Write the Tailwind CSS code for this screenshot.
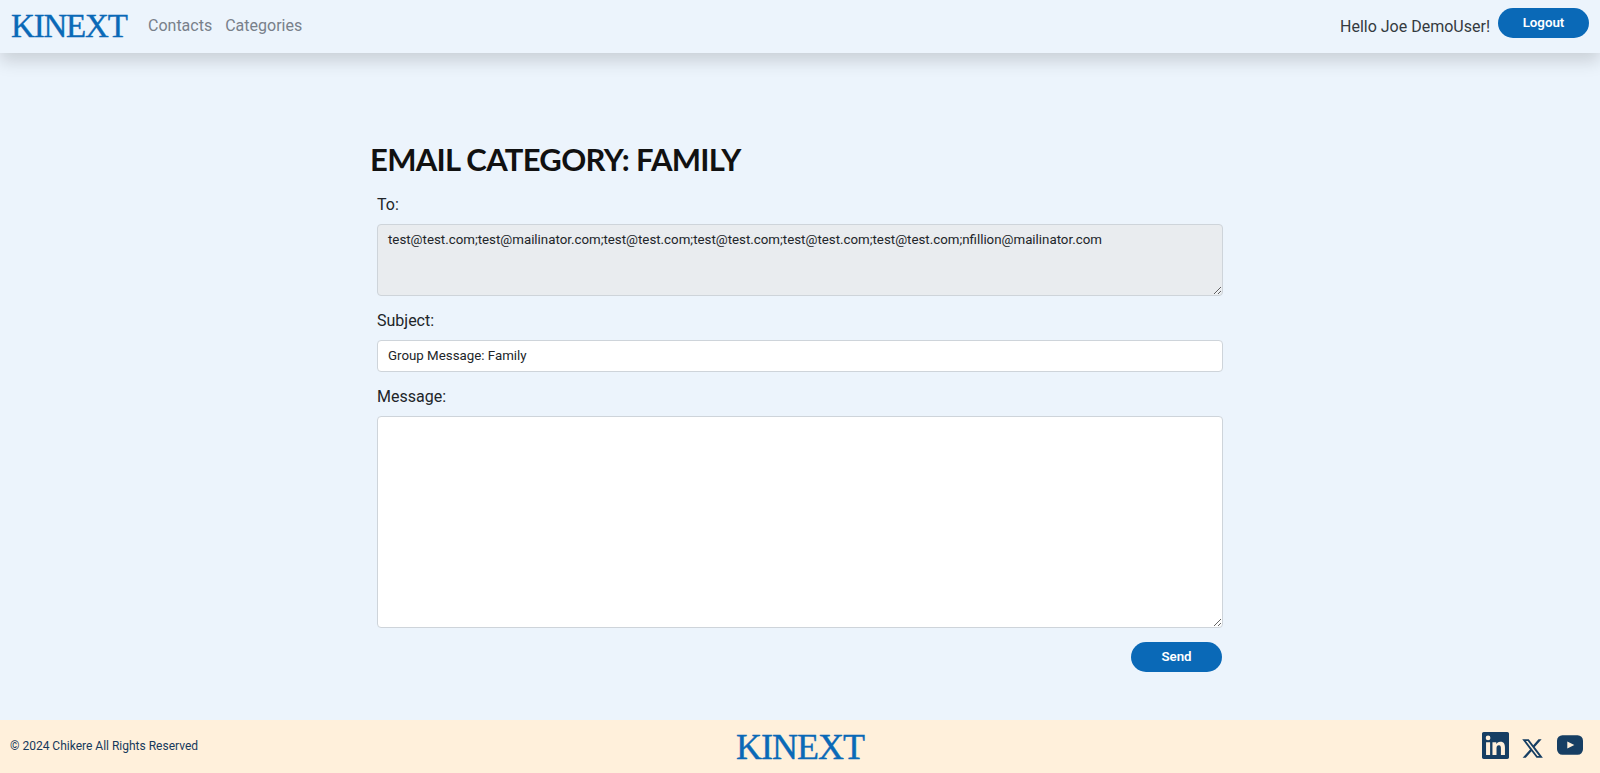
<!DOCTYPE html>
<html lang="en">
<head>
    <meta charset="UTF-8">
    <meta name="viewport" content="width=device-width, initial-scale=1.0">
    <title>Email Category</title>
    <script src="https://cdn.jsdelivr.net/npm/@tailwindcss/browser@4"></script>
</head>
<body class="bg-[#ecf4fc] font-['Roboto',sans-serif] h-[773px] flex flex-col overflow-hidden">

    <!-- Navbar -->
    <nav class="h-[53px] shrink-0 flex items-center justify-between pl-[11px] pr-[11px] bg-[#ecf4fc] shadow-[0_8px_16px_rgba(0,0,0,0.15)] relative">
        <div class="flex items-center">
            <a href="#" class="font-['Liberation_Serif',serif] text-[33px] leading-none tracking-[-1.2px] [-webkit-text-stroke:0.4px_#0a69b7] text-[#0a69b7] w-[137px]">KINEXT</a>
            <a href="#" class="text-base text-[#78808a] mr-[13px] pb-[1px]">Contacts</a>
            <a href="#" class="text-base text-[#78808a] pb-[1px]">Categories</a>
        </div>
        <div class="flex items-center">
            <span class="text-base text-[#343a40] mr-2">Hello Joe DemoUser!</span>
            <button class="w-[91px] h-[30px] mb-[7px] rounded-full bg-[#0a69b7] text-white text-[13.3px] font-semibold">Logout</button>
        </div>
    </nav>

    <!-- Main Content -->
    <main class="flex-1 flex justify-center">
        <div class="w-[860px] pt-[87px]">
            <h1 class="font-['Lato',sans-serif] font-bold text-[31px] leading-[38px] tracking-[-0.7px] text-[#111111] uppercase">Email Category: Family</h1>
            <form class="pl-[7px] pr-[7px] mt-[15px] flex flex-col">
                <label class="text-base leading-6 text-[#212529]">To:</label>
                <textarea disabled class="mt-[7px] h-[72px] w-full px-[10px] py-[5px] text-[13.3px] text-[#212529] bg-[#e9ecef] border border-[#ced4da] rounded-[4px]">test@test.com;test@mailinator.com;test@test.com;test@test.com;test@test.com;test@test.com;nfillion@mailinator.com</textarea>
                <label class="mt-[13px] text-base leading-6 text-[#212529]">Subject:</label>
                <input type="text" value="Group Message: Family" class="mt-[7px] h-[32px] w-full px-[10px] pb-[2px] text-[13.3px] text-[#212529] bg-white border border-[#ced4da] rounded-[4px]">
                <label class="mt-[13px] text-base leading-6 text-[#212529]">Message:</label>
                <textarea class="mt-[7px] h-[212px] w-full px-[10px] py-[5px] text-[13.3px] bg-white border border-[#ced4da] rounded-[4px]"></textarea>
                <div class="flex justify-end mt-[14px] mr-[1px]">
                    <button type="button" class="w-[91px] h-[30px] rounded-full bg-[#0a69b7] text-white text-[13.3px] font-semibold">Send</button>
                </div>
            </form>
        </div>
    </main>

    <!-- Footer -->
    <footer class="h-[53px] pt-[2px] shrink-0 bg-[#fff0db] grid grid-cols-3 items-center pl-[10px] pr-[17px]">
        <span class="text-xs text-[#16395b] pb-[4px]">© 2024 Chikere All Rights Reserved</span>
        <span class="justify-self-center font-['Liberation_Serif',serif] text-[36px] leading-none tracking-[-1px] [-webkit-text-stroke:0.4px_#0a69b7] text-[#0a69b7] ml-[7px] pb-[2px]">KINEXT</span>
        <div class="justify-self-end flex items-center text-[#163e63]">
            <!-- LinkedIn -->
            <svg class="w-[27px] h-[27px] -mt-[4px]" viewBox="0 0 24 24" fill="currentColor"><path d="M22.500 0h-21C.7 0 0 .7 0 1.500v21c0 .8.7 1.500 1.500 1.500h21c.8 0 1.500-.7 1.500-1.500v-21c0-.8-.7-1.500-1.500-1.500zM7.200 20.400H3.600V9h3.600v11.400zM5.400 7.400a2.100 2.100 0 1 1 0-4.200 2.100 2.100 0 0 1 0 4.200zM20.400 20.400h-3.600v-5.600c0-1.300 0-3-1.800-3s-2.100 1.400-2.100 2.900v5.700H9.300V9h3.400v1.600h.1c.5-.9 1.600-1.900 3.400-1.900 3.600 0 4.200 2.400 4.200 5.400v6.300z"/></svg>
            <!-- X -->
            <svg class="w-[23px] h-[23px] ml-[12px] mt-[2px]" viewBox="0 0 24 24" fill="currentColor"><path d="M18.244 2.250h3.308l-7.227 8.260 8.502 11.240H16.170l-5.214-6.817L4.990 21.750H1.680l7.730-8.835L1.254 2.250H8.080l4.713 6.231zm-1.161 17.520h1.833L7.084 4.126H5.117z"/></svg>
            <!-- YouTube -->
            <svg class="w-[26px] h-[26px] ml-[13px] -mt-[6px]" viewBox="0 0 24 24" fill="currentColor" fill-rule="evenodd"><path d="M5 3h14a5 5 0 0 1 5 5v8a5 5 0 0 1-5 5H5a5 5 0 0 1-5-5V8a5 5 0 0 1 5-5zM9.500 8.700v6.600l6.500-3.300z"/></svg>
        </div>
    </footer>

</body>
</html>
